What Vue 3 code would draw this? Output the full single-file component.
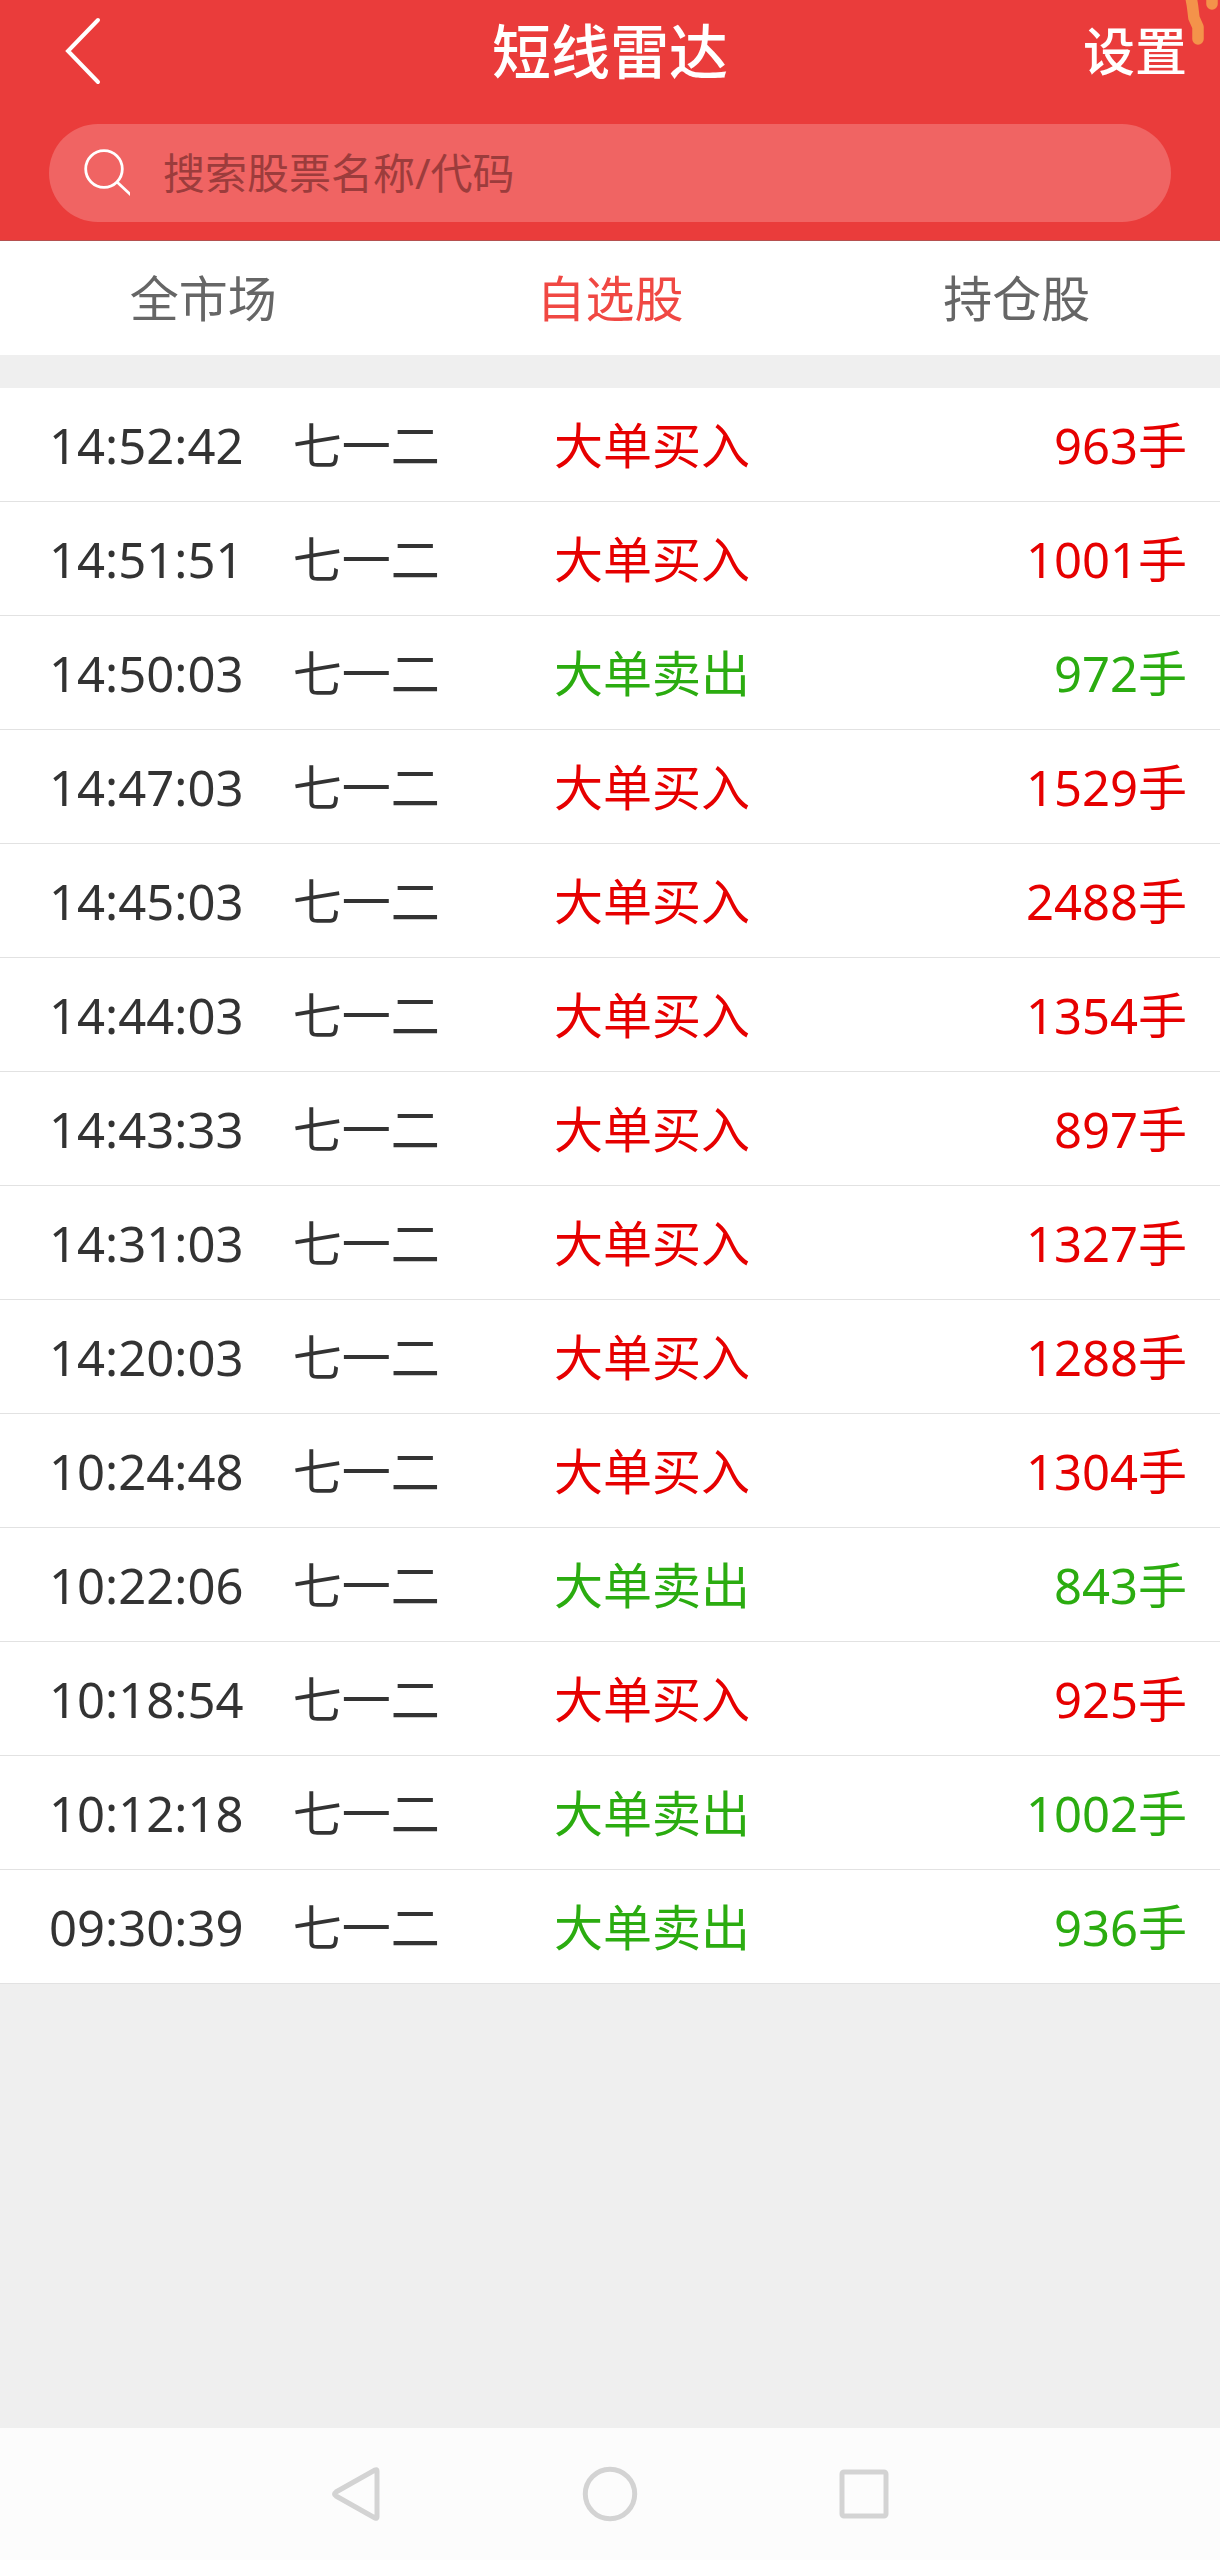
<script setup>
import { ref, computed } from 'vue';

const tabs = ['全市场', '自选股', '持仓股'];
const currentTab = ref(1);
const keyword = ref('');

const records = [
	{ time: '14:52:42', name: '七一二', type: 'buy', count: 963 },
	{ time: '14:51:51', name: '七一二', type: 'buy', count: 1001 },
	{ time: '14:50:03', name: '七一二', type: 'sell', count: 972 },
	{ time: '14:47:03', name: '七一二', type: 'buy', count: 1529 },
	{ time: '14:45:03', name: '七一二', type: 'buy', count: 2488 },
	{ time: '14:44:03', name: '七一二', type: 'buy', count: 1354 },
	{ time: '14:43:33', name: '七一二', type: 'buy', count: 897 },
	{ time: '14:31:03', name: '七一二', type: 'buy', count: 1327 },
	{ time: '14:20:03', name: '七一二', type: 'buy', count: 1288 },
	{ time: '10:24:48', name: '七一二', type: 'buy', count: 1304 },
	{ time: '10:22:06', name: '七一二', type: 'sell', count: 843 },
	{ time: '10:18:54', name: '七一二', type: 'buy', count: 925 },
	{ time: '10:12:18', name: '七一二', type: 'sell', count: 1002 },
	{ time: '09:30:39', name: '七一二', type: 'sell', count: 936 },
];

const typeText = { buy: '大单买入', sell: '大单卖出' };

const list = computed(() => records.filter(item => item.name.includes(keyword.value.trim())));
</script>

<template>
	<div class="page">
		<header class="header">
			<div class="title_bar">
				<button type="button" class="back" aria-label="返回">
					<svg width="40" height="70" viewBox="0 0 40 70" fill="none">
						<path d="M36 4 6 35l30 31" stroke="#fff" stroke-width="4" stroke-linecap="round" />
					</svg>
				</button>
				<h1>短线雷达</h1>
				<button type="button" class="setting">设置</button>
			</div>
			<label class="search">
				<svg width="47" height="48" viewBox="0 0 47 48" fill="none" stroke="#fff" stroke-width="2.8">
					<circle cx="21" cy="20" r="18.3" />
					<path d="M34 33 49 47" />
				</svg>
				<input v-model="keyword" type="text" placeholder="搜索股票名称/代码" aria-label="搜索" />
			</label>
			<svg class="doodle" width="40" height="50" viewBox="0 0 40 50" fill="none">
				<path
					d="M10 -6C13 4 13 12 14 18L18 27V39M32 -6V4"
					stroke="#f4934a"
					stroke-width="11.5"
					stroke-linecap="round"
					stroke-linejoin="round"
				/>
			</svg>
		</header>

		<nav class="tabs">
			<button
				v-for="(tab, i) in tabs"
				:key="tab"
				type="button"
				:class="{ on: currentTab === i }"
				@click="currentTab = i"
			>
				{{ tab }}
			</button>
		</nav>

		<main>
			<table class="list">
				<tbody>
					<tr v-for="item in list" :key="item.time">
						<td class="time">{{ item.time }}</td>
						<td class="name">{{ item.name }}</td>
						<td :class="item.type">{{ typeText[item.type] }}</td>
						<td class="count" :class="item.type">{{ item.count }}手</td>
					</tr>
				</tbody>
			</table>
		</main>

		<footer class="system_nav">
			<button type="button" aria-label="后退">
				<svg width="56" height="56" viewBox="0 0 56 56">
					<path d="M49 5V51Q49 53 47 52L8 30Q5 28 8 26L47 4Q49 3 49 5Z" />
				</svg>
			</button>
			<button type="button" aria-label="主页">
				<svg width="56" height="56" viewBox="0 0 56 56"><circle cx="28" cy="28" r="24.7" /></svg>
			</button>
			<button type="button" aria-label="最近任务">
				<svg width="56" height="56" viewBox="0 0 56 56">
					<rect x="6" y="6" width="44" height="44" rx="2" />
				</svg>
			</button>
		</footer>
	</div>
</template>

<style>
body {
	margin: 0;
	background: #efefef;
}
</style>

<style scoped>
.page {
	display: flex;
	flex-direction: column;
	min-height: 100vh;
	background: #efefef;
	color: #333;
	font-family: 'Noto Sans', 'Noto Sans CJK SC', sans-serif;
	font-size: 49px;
	line-height: 60px;
}
button {
	margin: 0;
	padding: 0;
	border: 0 none;
	background: none;
	color: inherit;
	font: inherit;
	cursor: pointer;
}
svg {
	display: block;
}
.header {
	position: relative;
	padding-bottom: 18px;
	border-bottom: 1px solid #b5504f;
	background: #ea3c3b;
	color: #fff;
}
.title_bar {
	display: grid;
	grid-template-columns: 1fr auto 1fr;
	align-items: center;
	height: 102px;
	padding: 0 33px 0 62px;
}
.title_bar h1 {
	margin: 0;
	padding-right: 29px;
	font-size: 59px;
	font-weight: 500;
}
.back {
	justify-self: start;
}
.setting {
	justify-self: end;
	font-size: 52px;
	font-weight: 500;
}
.search {
	display: flex;
	align-items: center;
	gap: 33px;
	height: 98px;
	margin: 22px 49px 0;
	padding: 0 34px;
	border-radius: 49px;
	background: #f06463;
	box-sizing: border-box;
}
.search input {
	flex: 1;
	min-width: 0;
	padding: 0;
	border: 0 none;
	outline: none;
	background: none;
	color: #fff;
	font: inherit;
	font-size: 42px;
}
.search input::placeholder {
	color: #9c3c3c;
	opacity: 1;
}
.doodle {
	position: absolute;
	top: 0;
	right: 0;
}
.tabs {
	display: grid;
	grid-template-columns: repeat(3, 1fr);
	height: 114px;
	margin-bottom: 33px;
	background: #fff;
	color: #666;
}
.tabs .on {
	color: #f04843;
}
main {
	flex: 1;
}
.list {
	width: 100%;
	border-spacing: 0;
	table-layout: fixed;
	background: #fff;
}
.list td {
	height: 114px;
	padding: 0;
	border-bottom: 1px solid #e2e2e2;
	box-sizing: border-box;
	white-space: nowrap;
}
.list .time {
	width: 24%;
	padding-left: 49px;
}
.list .name {
	width: 21.4%;
}
.list .count {
	padding-right: 33px;
	text-align: right;
}
.buy {
	color: #e60000;
}
.sell {
	color: #2bac10;
}
.system_nav {
	display: flex;
	align-items: center;
	justify-content: center;
	gap: 198px;
	height: 132px;
	background: #fcfcfc;
}
.system_nav svg {
	fill: none;
	stroke: #d3d3d3;
	stroke-width: 5;
}
</style>
